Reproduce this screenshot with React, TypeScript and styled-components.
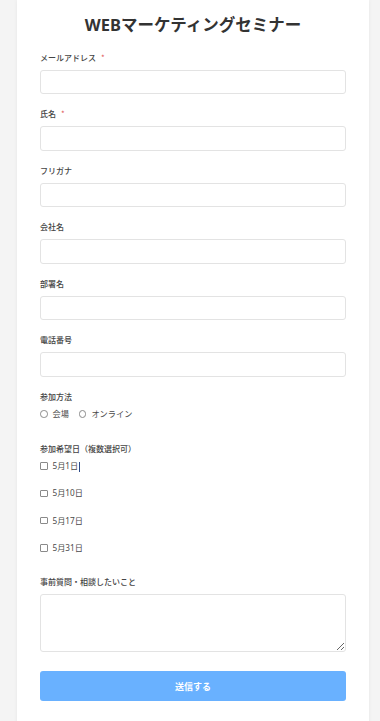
import React from "react";
import styled, { createGlobalStyle } from "styled-components";

const Global = createGlobalStyle`
  html, body { margin: 0; padding: 0; background: #f4f4f4; }
  body { font-family: "Noto Sans", "Noto Sans CJK JP", sans-serif; }
  * { box-sizing: border-box; }
`;

const Card = styled.form`
  margin-left: 17px;
  width: 352px;
  min-height: 721px;
  background: #fff;
  box-shadow: 0 0 4px rgba(0, 0, 0, 0.06);
  padding: 13px 23px 30px;
  display: flex;
  flex-direction: column;
`;

const Title = styled.h1`
  margin: 0 0 14.5px;
  font-size: 16.5px;
  line-height: 24px;
  font-weight: 700;
  color: #333;
  text-align: center;
  font-family: "Noto Sans", "Noto Sans CJK JP", sans-serif;
`;

const Field = styled.div<{ $gap?: number }>`
  display: flex;
  flex-direction: column;
  margin-bottom: ${(p) => p.$gap ?? 14}px;
`;

const Label = styled.label<{ $after?: number }>`
  font-size: 8px;
  line-height: 12px;
  font-weight: 500;
  color: #444;
  margin-bottom: ${(p) => p.$after ?? 6}px;
  font-family: "Noto Sans CJK JP", sans-serif;
`;

const Req = styled.span`
  color: #e05555;
  margin-left: 5px;
  font-weight: 400;
`;

const Input = styled.input`
  height: 24.5px;
  width: 100%;
  border: 1px solid #e3e3e3;
  border-radius: 3px;
  background: #fff;
  outline: none;
`;

const TextArea = styled.textarea`
  height: 58px;
  width: 100%;
  border: 1px solid #e3e3e3;
  border-radius: 3px;
  background: #fff;
  outline: none;
  resize: vertical;
`;

const RadioRow = styled.div`
  display: flex;
  align-items: center;
  gap: 10px;
  height: 12px;
`;

const OptionList = styled.div`
  display: flex;
  flex-direction: column;
  gap: 15.3px;
`;

const Option = styled.label`
  display: flex;
  align-items: center;
  gap: 5px;
  height: 12px;
  font-size: 8.2px;
  line-height: 12px;
  color: #4a4a4a;
  font-family: "Noto Sans", "Noto Sans CJK JP", sans-serif;
`;

const Mark = styled.input<{ $round?: boolean }>`
  appearance: none;
  -webkit-appearance: none;
  margin: 0;
  width: 7.5px;
  height: 7.5px;
  border: 1px solid #8a8a8a;
  border-radius: ${(p) => (p.$round ? "50%" : "1px")};
  background: #fff;
`;

const Caret = styled.span`
  display: inline-block;
  width: 1px;
  height: 10px;
  margin-left: 1px;
  background: #2c4a88;
  vertical-align: middle;
`;

const Submit = styled.button`
  margin-top: 19px;
  height: 30.5px;
  width: 100%;
  border: none;
  border-radius: 3px;
  background: #69b1ff;
  color: #fff;
  font-size: 9px;
  font-weight: 700;
  font-family: "Noto Sans CJK JP", sans-serif;
`;

const textFields: { label: string; required?: boolean }[] = [
  { label: "メールアドレス", required: true },
  { label: "氏名", required: true },
  { label: "フリガナ" },
  { label: "会社名" },
  { label: "部署名" },
  { label: "電話番号" },
];

const dates = ["5月1日", "5月10日", "5月17日", "5月31日"];

export default function App() {
  return (
    <>
      <Global />
      <Card onSubmit={(e) => e.preventDefault()}>
        <Title>WEBマーケティングセミナー</Title>
        {textFields.map((f) => (
          <Field key={f.label}>
            <Label>
              {f.label}
              {f.required && <Req>*</Req>}
            </Label>
            <Input type="text" />
          </Field>
        ))}
        <Field $gap={22.5}>
          <Label $after={5.5}>参加方法</Label>
          <RadioRow>
            <Option>
              <Mark type="radio" name="method" $round />
              会場
            </Option>
            <Option>
              <Mark type="radio" name="method" $round />
              オンライン
            </Option>
          </RadioRow>
        </Field>
        <Field $gap={22.5}>
          <Label $after={5.5}>参加希望日（複数選択可）</Label>
          <OptionList>
            {dates.map((d, i) => (
              <Option key={d}>
                <Mark type="checkbox" />
                <span>
                  {d}
                  {i === 0 && <Caret />}
                </span>
              </Option>
            ))}
          </OptionList>
        </Field>
        <Field $gap={0}>
          <Label $after={5.5}>事前質問・相談したいこと</Label>
          <TextArea />
        </Field>
        <Submit type="submit">送信する</Submit>
      </Card>
    </>
  );
}
